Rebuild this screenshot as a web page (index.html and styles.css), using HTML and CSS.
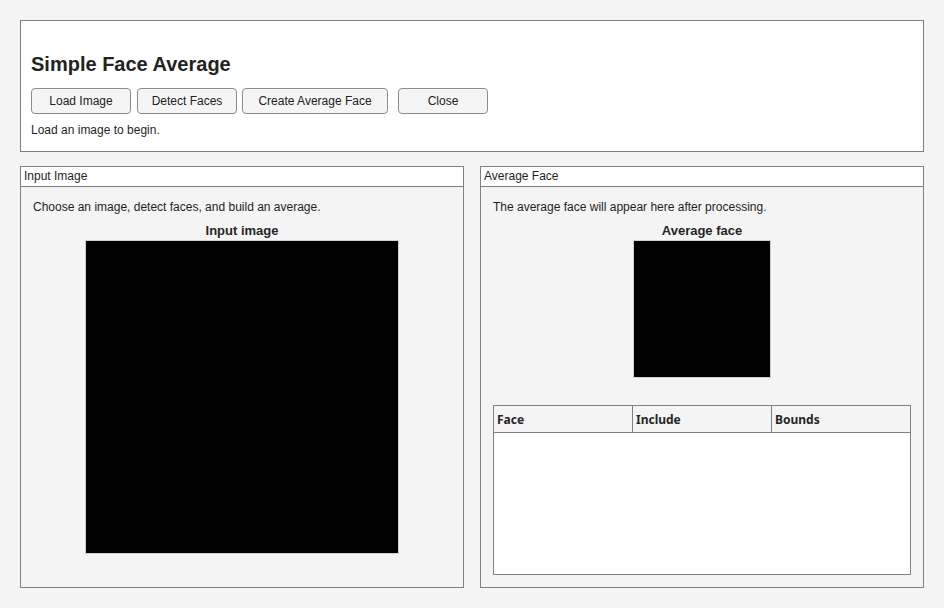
FILE: index.html
```html
<!DOCTYPE html>
<html lang="en">
<head>
    <meta charset="UTF-8">
    <title>Simple Face Average</title>
    <link rel="stylesheet" href="styles.css">
</head>
<body>

    <div class="app-header">
        <h1>Simple Face Average</h1>
        <div class="toolbar">
            <button class="tool-button btn-load">Load Image</button>
            <button class="tool-button btn-detect">Detect Faces</button>
            <button class="tool-button btn-average">Create Average Face</button>
            <button class="tool-button btn-close">Close</button>
        </div>
        <p class="status">Load an image to begin.</p>
    </div>

    <div class="panels">
        <div class="panel">
            <div class="panel-title">Input Image</div>
            <div class="panel-body">
                <p class="panel-hint">Choose an image, detect faces, and build an average.</p>
                <div class="axes-label">Input image</div>
                <div class="image-box input-box"></div>
            </div>
        </div>

        <div class="panel">
            <div class="panel-title">Average Face</div>
            <div class="panel-body">
                <p class="panel-hint">The average face will appear here after processing.</p>
                <div class="axes-label">Average face</div>
                <div class="image-box average-box"></div>

                <div class="face-table">
                    <div class="table-head">
                        <div class="table-col">Face</div>
                        <div class="table-col">Include</div>
                        <div class="table-col">Bounds</div>
                    </div>
                    <div class="table-body"></div>
                </div>
            </div>
        </div>
    </div>

</body>
</html>
```

FILE: styles.css
```css
/* --- Page --- */
body {
    margin: 0;
    padding: 20px 20px 0 20px;
    background-color: #f4f4f4;
    font-family: 'Liberation Sans', Arial, sans-serif;
    font-size: 12px;
    color: #1f1f1f;
}

/* --- Header box with title, buttons and status --- */
.app-header {
    width: 904px;
    height: 132px;
    box-sizing: border-box;
    background-color: #ffffff;
    border: 1px solid #808080;
    padding: 31px 10px 0 10px;
}

.app-header h1 {
    margin: 0 0 12px 0;
    font-size: 20px;
    line-height: 24px;
    font-weight: bold;
    color: #222222;
}

.toolbar {
    display: flex;
    gap: 6px;
}

.tool-button {
    height: 26px;
    padding: 0;
    background-color: #f5f5f5;
    border: 1px solid #8c8c8c;
    border-radius: 4px;
    font-family: 'Liberation Sans', Arial, sans-serif;
    font-size: 12px;
    color: #222222;
}

.btn-load { width: 100px; }
.btn-detect { width: 100px; margin-right: -1px; }
.btn-average { width: 146px; }
.btn-close { width: 90px; margin-left: 4px; }

.status {
    margin: 9px 0 0 0;
    line-height: 15px;
}

/* --- Two panels --- */
.panels {
    display: flex;
    gap: 16px;
    margin-top: 14px;
}

.panel {
    width: 444px;
    height: 422px;
    box-sizing: border-box;
    border: 1px solid #808080;
    background-color: #f4f4f4;
    display: flex;
    flex-direction: column;
}

.panel-title {
    height: 19px;
    line-height: 19px;
    padding-left: 3px;
    background-color: #ffffff;
    border-bottom: 1px solid #808080;
}

.panel-body {
    padding: 13px 12px 0 12px;
    display: flex;
    flex-direction: column;
}

.panel-hint {
    margin: 0;
    line-height: 15px;
}

.axes-label {
    margin-top: 8px;
    text-align: center;
    font-size: 13px;
    line-height: 16px;
    font-weight: bold;
    color: #262626;
}

.image-box {
    align-self: center;
    box-sizing: border-box;
    margin-top: 1px;
    background-color: #000000;
    border: 1px solid #d0d0d0;
}

.input-box {
    width: 314px;
    height: 314px;
}

.average-box {
    width: 138px;
    height: 138px;
}

/* --- Face table --- */
.face-table {
    margin-top: 27px;
    height: 170px;
    box-sizing: border-box;
    border: 1px solid #808080;
    background-color: #ffffff;
    display: flex;
    flex-direction: column;
}

.table-head {
    display: flex;
    height: 26px;
    background-color: #f4f4f4;
    border-bottom: 1px solid #808080;
}

.table-col {
    flex: 1;
    padding: 1px 0 0 3px;
    line-height: 25px;
    font-family: 'Noto Sans', 'Open Sans', sans-serif;
    font-size: 12px;
    font-weight: bold;
    color: #262626;
    border-left: 1px solid #808080;
}

.table-col:first-child {
    border-left: none;
}

.table-body {
    flex: 1;
}
```
